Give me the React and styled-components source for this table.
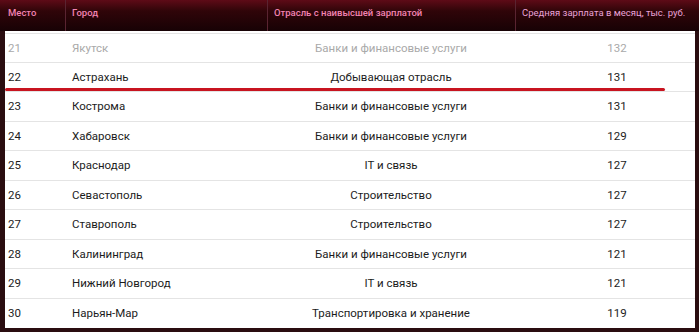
import React from "react";
import styled, { createGlobalStyle } from "styled-components";

const Global = createGlobalStyle`
  html, body { margin: 0; padding: 0; background: #2a0d10; }
  body { font-family: Roboto, "Noto Sans", sans-serif; }
`;

const Frame = styled.div`
  position: relative;
  width: 699px;
  height: 332px;
  box-sizing: border-box;
  background: #2a0d10;
  padding: 0 4px 3px 5px;
  overflow: hidden;
`;

const Header = styled.div`
  display: grid;
  grid-template-columns: 60px 202px 248px 1fr;
  height: 31px;
  margin-left: -5px;
  margin-right: -4px;
  padding-left: 5px;
  padding-right: 4px;
  background: linear-gradient(180deg, #5e0b17 0%, #300509 35%, #170205 100%);
`;

const HeadCell = styled.div`
  display: flex;
  align-items: center;
  padding-left: ${(p) => p.$pad || 3}px;
  padding-bottom: 6px;
  font-size: 9.5px;
  font-weight: ${(p) => (p.$light ? 400 : 500)};
  color: ${(p) => (p.$light ? "#e9a2d6" : "#f283b2")};
  border-left: ${(p) => (p.$first ? "none" : "1px solid #5a2431")};
  white-space: nowrap;
`;

const Body = styled.div`
  background: #fff;
  padding-top: 2px;
`;

const Row = styled.div`
  display: grid;
  grid-template-columns: 60px 202px 248px 1fr;
  height: 29.5px;
  box-sizing: border-box;
  border-top: ${(p) => (p.$first ? "1.5px solid #e4e4e4" : "none")};
  border-bottom: ${(p) => (p.$last ? "none" : "1.5px solid #e4e4e4")};
  color: ${(p) => (p.$faded ? "#a9a9a9" : "#1c1c1c")};
  font-size: 11.5px;
`;

const Cell = styled.div`
  display: flex;
  align-items: center;
  justify-content: ${(p) => (p.$center ? "center" : "flex-start")};
  padding-left: ${(p) => p.$pad || 0}px;
  white-space: nowrap;
`;

const Marker = styled.div`
  position: absolute;
  left: 5px;
  top: 88px;
  width: 660px;
  height: 3px;
  background: #c81420;
  border-radius: 2px;
`;

const rows = [
  ["21", "Якутск", "Банки и финансовые услуги", "132"],
  ["22", "Астрахань", "Добывающая отрасль", "131"],
  ["23", "Кострома", "Банки и финансовые услуги", "131"],
  ["24", "Хабаровск", "Банки и финансовые услуги", "129"],
  ["25", "Краснодар", "IT и связь", "127"],
  ["26", "Севастополь", "Строительство", "127"],
  ["27", "Ставрополь", "Строительство", "127"],
  ["28", "Калининград", "Банки и финансовые услуги", "121"],
  ["29", "Нижний Новгород", "IT и связь", "121"],
  ["30", "Нарьян-Мар", "Транспортировка и хранение", "119"],
];

export default function App() {
  return (
    <>
      <Global />
      <Frame>
        <Header>
          <HeadCell $first>Место</HeadCell>
          <HeadCell $pad={6}>Город</HeadCell>
          <HeadCell $pad={6}>Отрасль с наивысшей зарплатой</HeadCell>
          <HeadCell $pad={6} $light>
            Средняя зарплата в месяц, тыс. руб.
          </HeadCell>
        </Header>
        <Body>
          {rows.map((r, i) => (
            <Row key={r[0]} $first={i === 0} $last={i === rows.length - 1} $faded={i === 0}>
              <Cell $pad={3}>{r[0]}</Cell>
              <Cell $pad={7}>{r[1]}</Cell>
              <Cell $center>{r[2]}</Cell>
              <Cell $center $pad={24}>{r[3]}</Cell>
            </Row>
          ))}
        </Body>
        <Marker />
      </Frame>
    </>
  );
}
